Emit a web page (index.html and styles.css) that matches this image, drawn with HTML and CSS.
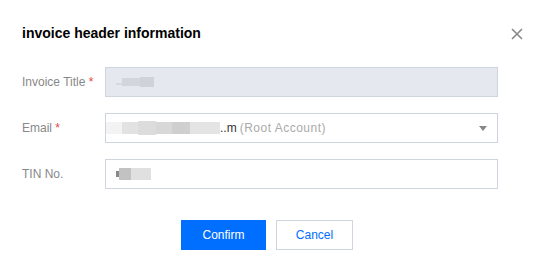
FILE: index.html
```html
<!DOCTYPE html>
<html lang="en">
<head>
    <meta charset="UTF-8">
    <title>invoice header information</title>
    <link rel="stylesheet" href="styles.css">
</head>
<body>
    <div class="dialog">
        <div class="dialog-head">
            <h3 class="dialog-title">invoice header information</h3>
            <button class="close-btn" aria-label="close">
                <svg width="12" height="12" viewBox="0 0 12 12"><path d="M1 1L11 11M11 1L1 11" stroke="#888" stroke-width="1.6" fill="none"/></svg>
            </button>
        </div>
        <div class="form">
            <div class="form-row">
                <label class="form-label">Invoice Title <span class="req">*</span></label>
                <div class="field field-disabled">
                    <span class="blur"><i class="b1"></i><i class="b2"></i><i class="b3"></i></span>
                </div>
            </div>
            <div class="form-row">
                <label class="form-label">Email <span class="req">*</span></label>
                <div class="field field-select">
                    <span class="blur"><i class="e1"></i><i class="e2"></i><i class="e3"></i><i class="e4"></i><i class="e5"></i><i class="e6"></i></span>
                    <span class="value">..m</span>
                    <span class="hint">(Root Account)</span>
                    <span class="caret"></span>
                </div>
            </div>
            <div class="form-row">
                <label class="form-label">TIN No.</label>
                <div class="field">
                    <span class="blur"><i class="t1"></i><i class="t2"></i><i class="t3"></i></span>
                </div>
            </div>
        </div>
        <div class="dialog-foot">
            <button class="btn btn-primary">Confirm</button>
            <button class="btn btn-default">Cancel</button>
        </div>
    </div>
</body>
</html>
```

FILE: styles.css
```css
* {
    margin: 0;
    padding: 0;
    box-sizing: border-box;
}

body {
    width: 542px;
    height: 270px;
    background: #fff;
    font-family: "Liberation Sans", Arial, sans-serif;
    font-size: 12px;
    color: #000;
}

.dialog {
    padding: 24px 45px 0 22px;
}

.dialog-head {
    display: flex;
    justify-content: space-between;
    align-items: center;
    height: 18px;
}

.dialog-title {
    font-size: 14px;
    font-weight: bold;
    color: #000;
}

.close-btn {
    border: none;
    background: none;
    width: 12px;
    height: 12px;
    margin-right: -26px;
    margin-top: 2px;
    display: flex;
}

.form {
    margin-top: 25px;
    display: flex;
    flex-direction: column;
    gap: 16px;
}

.form-row {
    display: grid;
    grid-template-columns: 83px 393px;
    align-items: center;
}

.form-label {
    color: #888;
}

.req {
    color: #e54545;
}

.field {
    height: 30px;
    border: 1px solid #cfd5de;
    display: flex;
    align-items: center;
    padding: 0 10px;
    gap: 3px;
    position: relative;
}

.field-disabled {
    background: #e5e8ee;
}

.blur {
    display: flex;
    align-items: center;
    height: 14px;
}

.blur i {
    display: block;
    height: 12px;
}

.b1 { width: 6px; background: #d6d9df; height: 2px !important; margin-top: 4px; }
.b2 { width: 18px; background: #d2d5db; height: 8px !important; }
.b3 { width: 14px; background: #cfd2d8; height: 10px !important; }

.field-select .blur {
    margin-left: -10px;
}

.e1 { width: 16px; background: #f3f3f3; }
.e2 { width: 16px; background: #e2e2e2; }
.e3 { width: 18px; background: #dcdcdc; height: 14px !important; }
.e4 { width: 16px; background: #d8d8d8; }
.e5 { width: 18px; background: #cfcfcf; }
.e6 { width: 30px; background: #e4e4e4; }

.value {
    color: #333;
    margin-left: -3px;
}

.hint {
    color: #aaa;
    letter-spacing: 0.5px;
}

.caret {
    position: absolute;
    right: 10px;
    top: 12px;
    width: 0;
    height: 0;
    border-left: 4px solid transparent;
    border-right: 4px solid transparent;
    border-top: 5px solid #888;
}

.t1 { width: 3px; background: #888; height: 6px !important; }
.t2 { width: 12px; background: #c2c2c2; }
.t3 { width: 20px; background: #e0e0e0; }

.dialog-foot {
    display: flex;
    justify-content: center;
    gap: 10px;
    margin-top: 31px;
    padding-left: 15px;
}

.btn {
    height: 30px;
    font-family: "Liberation Sans", Arial, sans-serif;
    font-size: 12px;
    cursor: pointer;
}

.btn-primary {
    width: 85px;
    background: #006eff;
    color: #fff;
    border: none;
}

.btn-default {
    width: 77px;
    background: #fff;
    color: #006eff;
    border: 1px solid #cfd5de;
}
```
